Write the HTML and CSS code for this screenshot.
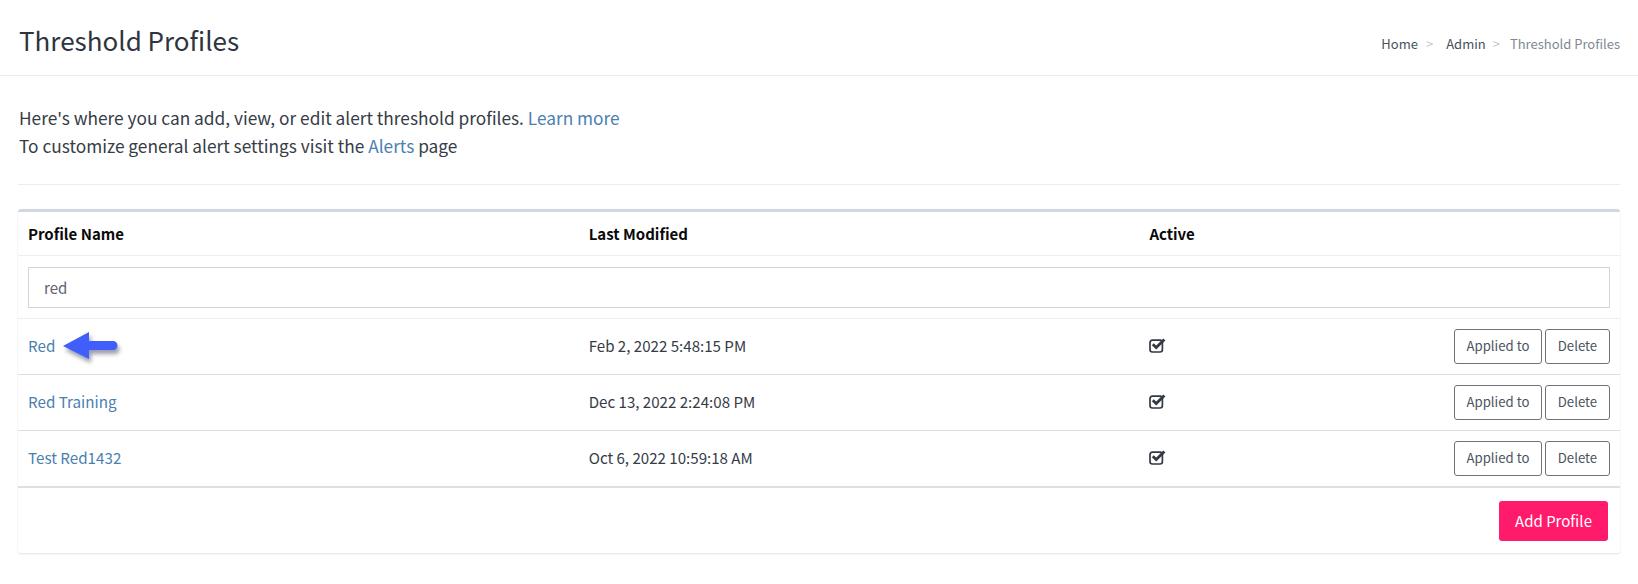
FILE: index.html
```html
<!DOCTYPE html>
<html lang="en">
<head>
<meta charset="utf-8">
<title>Threshold Profiles</title>
<link rel="stylesheet" href="styles.css">
</head>
<body>
<header class="page-head">
  <h1 class="title">Threshold Profiles</h1>
  <nav class="crumbs">
    <a class="crumb" href="#">Home</a><span class="sep sep-wide">&gt;</span><a class="crumb" href="#">Admin</a><span class="sep">&gt;</span><span class="crumb-current">Threshold Profiles</span>
  </nav>
</header>
<main class="content">
  <p class="intro">Here's where you can add, view, or edit alert threshold profiles. <a href="#">Learn more</a><br>To customize general alert settings visit the <a href="#">Alerts</a> page</p>
  <hr class="rule">
  <section class="card">
    <div class="row row-head">
      <div>Profile Name</div><div>Last Modified</div><div>Active</div>
    </div>
    <div class="filter"><input class="filter-input" type="text" value="red"></div>
    <div class="row row-body first">
      <div class="name"><a href="#">Red</a>
        <svg class="arrow" width="64" height="40" viewBox="0 0 64 40"><path class="arrow-shadow" d="M3 18 L29 4 V13 H53 a4.5 4.5 0 0 1 0 9 H29 V31 Z" transform="translate(2 4)"/><path class="arrow-fill" d="M3 18 L29 4 V13 H53 a4.5 4.5 0 0 1 0 9 H29 V31 Z"/></svg>
      </div>
      <div class="date">Feb 2, 2022 5:48:15 PM</div>
      <div class="active-cell">
        <svg class="check" width="17" height="15" viewBox="0 0 17 15"><rect x="1" y="2.2" width="12.4" height="11.8" rx="2.4"/><path d="M3.8 6.2 L7.2 9.6 L15.4 1.6"/></svg>
        <div class="actions"><button class="btn">Applied to</button><button class="btn btn-del">Delete</button></div>
      </div>
    </div>
    <div class="row row-body">
      <div class="name"><a href="#">Red Training</a></div>
      <div class="date">Dec 13, 2022 2:24:08 PM</div>
      <div class="active-cell">
        <svg class="check" width="17" height="15" viewBox="0 0 17 15"><rect x="1" y="2.2" width="12.4" height="11.8" rx="2.4"/><path d="M3.8 6.2 L7.2 9.6 L15.4 1.6"/></svg>
        <div class="actions"><button class="btn">Applied to</button><button class="btn btn-del">Delete</button></div>
      </div>
    </div>
    <div class="row row-body last">
      <div class="name"><a href="#">Test Red1432</a></div>
      <div class="date">Oct 6, 2022 10:59:18 AM</div>
      <div class="active-cell">
        <svg class="check" width="17" height="15" viewBox="0 0 17 15"><rect x="1" y="2.2" width="12.4" height="11.8" rx="2.4"/><path d="M3.8 6.2 L7.2 9.6 L15.4 1.6"/></svg>
        <div class="actions"><button class="btn">Applied to</button><button class="btn btn-del">Delete</button></div>
      </div>
    </div>
    <div class="card-foot"><button class="btn-add">Add Profile</button></div>
  </section>
</main>
</body>
</html>
```
FILE: styles.css
```css
* { box-sizing: border-box; }
html, body { margin: 0; padding: 0; background: #fff; }
body {
  font-family: "Noto Sans CJK SC", "Noto Sans", sans-serif;
  color: #333a44;
  font-size: 15px;
  height: 584px;
  overflow: hidden;
}
a { color: #4a80b0; text-decoration: none; }
.page-head {
  height: 76px;
  padding: 4px 18px 0 19px;
  display: flex;
  align-items: center;
  justify-content: space-between;
  border-bottom: 1px solid #e9e9ec;
}
.title { margin: 0; font-size: 26px; font-weight: 400; color: #2f3540; line-height: 34px; }
.crumbs { font-size: 13px; display: flex; align-items: center; margin-top: 8px; }
.crumb { color: #47505c; }
.crumb-current { color: #7f8894; }
.sep { color: #c4c7cc; margin: 0 10px 0 7px; }
.sep-wide { margin: 0 13px 0 8px; }
.content { padding: 28px 18px 0; }
.intro { margin: 0 0 0 1px; font-size: 17.3px; line-height: 28px; color: #353c46; }
.rule { border: 0; border-top: 1px solid #ececef; margin: 24px 0 24px; }
.card {
  border-top: 3px solid #d2d6e0;
  border-radius: 3px;
  box-shadow: 0 1px 2px rgba(0,0,0,.12);
  height: 344px;
}
.row {
  display: grid;
  grid-template-columns: 35% 35% 30%;
  align-items: center;
}
.row > div { padding: 0 10px; }
.row-head {
  height: 44px;
  font-size: 15px;
  font-weight: 700;
  color: #0a0a0a;
  border-bottom: 1px solid #eeeef0;
}
.filter { height: 63px; padding: 11px 10px 0; border-bottom: 1px solid #eeeef0; }
.filter-input {
  display: block;
  width: 100%;
  height: 41px;
  padding: 0 15px;
  font: inherit;
  font-size: 15px;
  color: #5b626d;
  border: 1px solid #d3d5dc;
  border-radius: 0;
  outline: 0;
}
.row-body { height: 56px; border-bottom: 1px solid #dedfe2; font-size: 15px; color: #353c46; }
.row-body.last { height: 57px; border-bottom: 2px solid #dedfe2; }
.row > .name, .row > .date { padding-bottom: 4px; }
.date { font-size: 15.1px; }
.name { position: relative; font-size: 15.2px; }
.arrow { position: absolute; left: 42px; top: -6px; }
.arrow-fill { fill: #3f5efb; }
.arrow-shadow { fill: rgba(30,35,70,.45); filter: blur(2px); }
.active-cell { display: flex; align-items: center; justify-content: space-between; }
.check { margin-top: -3px; }
.check rect { fill: none; stroke: #333a44; stroke-width: 1.7; }
.check path { fill: none; stroke: #333a44; stroke-width: 2.8; }
.actions { display: flex; gap: 3px; }
.btn {
  width: 88px;
  height: 35px;
  padding: 0 0 2px;
  font: inherit;
  font-size: 13.2px;
  color: #4c535e;
  background: #fff;
  border: 1px solid #6f747b;
  border-radius: 3px;
}
.btn-del { width: 65px; }
.card-foot { display: flex; justify-content: flex-end; padding: 13px 12px 0 0; }
.btn-add {
  width: 109px;
  height: 40px;
  padding: 0 0 2px;
  font: inherit;
  font-size: 15px;
  font-weight: 400;
  color: #fff;
  background: #ff1a6b;
  border: 0;
  border-radius: 3px;
}
```
